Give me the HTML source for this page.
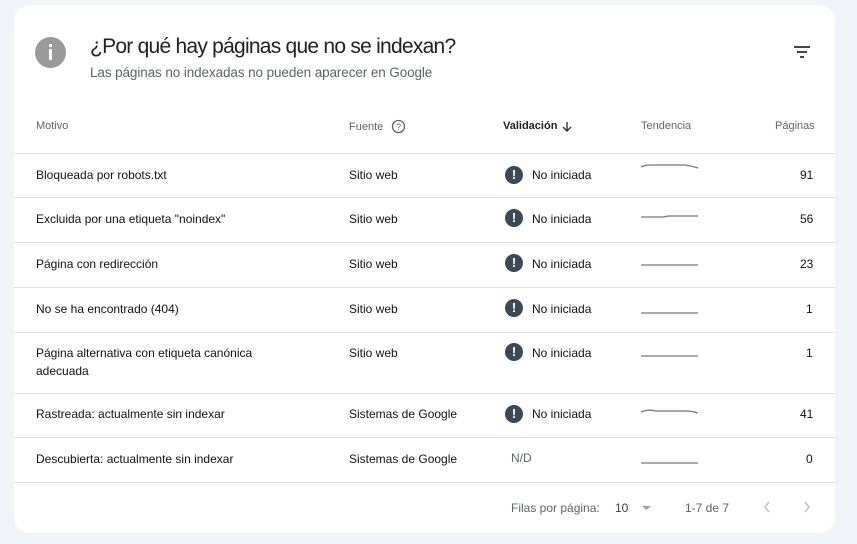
<!DOCTYPE html>
<html><head><meta charset="utf-8"><style>
*{margin:0;padding:0;box-sizing:border-box}
body{width:857px;height:544px;background:#f0f3f8;font-family:"Liberation Sans",Arial,sans-serif;position:relative;overflow:hidden;color:#202124}
.card{position:absolute;left:14px;top:5px;width:821px;height:528px;background:#fff;border-radius:16px}
.a{position:absolute;white-space:nowrap}
.line{position:absolute;left:14px;width:821px;height:1px;background:#e0e0e0}
.t{font-size:12px;color:#111}
.h{font-size:11px;color:#5f6368}
.ex{position:absolute;width:18px;height:18px;border-radius:50%;background:#3c4a57;color:#fff;font-weight:bold;font-size:13px;text-align:center;line-height:18px}
</style></head><body>
<div class="card"></div>
<div class="a" style="left:35px;top:37px;width:31px;height:31px;border-radius:50%;background:#9a9a9a"></div>
<div class="a" style="left:49px;top:44px;width:3px;height:3px;background:#fff;border-radius:1px"></div>
<div class="a" style="left:49px;top:49px;width:3px;height:11px;background:#fff;border-radius:1px"></div>
<div class="a" style="left:90px;top:35px;font-size:21px;color:#202124;letter-spacing:-0.75px">¿Por qué hay páginas que no se indexan?</div>
<div class="a" style="left:90px;top:65px;font-size:13.5px;color:#5f6368;letter-spacing:-0.1px">Las páginas no indexadas no pueden aparecer en Google</div>
<svg class="a" style="left:793px;top:45px" width="18" height="14"><path d="M1 2h16M4 7h10M7 12h4" stroke="#444" stroke-width="2"/></svg>

<div class="a h" style="left:36px;top:120px">Motivo</div>
<div class="a h" style="left:349px;top:121px">Fuente</div>
<svg class="a" style="left:391px;top:119px" width="15" height="15"><circle cx="7.5" cy="7.5" r="6" fill="none" stroke="#5f6368" stroke-width="1.3"/><text x="7.5" y="11" font-size="9" text-anchor="middle" fill="#5f6368" font-family="Liberation Sans">?</text></svg>
<div class="a" style="left:503px;top:120px;font-size:11px;color:#202124;font-weight:bold">Validación</div>
<svg class="a" style="left:561px;top:121px" width="12" height="12"><path d="M6 1v9M2 6l4 4 4-4" stroke="#333" stroke-width="1.4" fill="none"/></svg>
<div class="a h" style="left:641px;top:120px">Tendencia</div>
<div class="a h" style="left:775px;top:120px">Páginas</div>

<div class="line" style="top:153px"></div>
<div class="line" style="top:197px"></div>
<div class="line" style="top:242px"></div>
<div class="line" style="top:287px"></div>
<div class="line" style="top:332px"></div>
<div class="line" style="top:393px"></div>
<div class="line" style="top:437px"></div>
<div class="line" style="top:482px"></div>

<div class="a t" style="left:36px;top:168px">Bloqueada por robots.txt</div>
<div class="a t" style="left:349px;top:168px">Sitio web</div>
<div class="ex" style="left:505px;top:166px">!</div><div class="a t" style="left:532px;top:168px">No iniciada</div>
<svg class="a" style="left:640px;top:162px" width="60" height="12"><path d="M1 5Q5 3 10 3L45 3Q52 4 58 6" stroke="#777" stroke-width="1.3" fill="none"/></svg>
<div class="a t" style="left:800px;top:168px">91</div>

<div class="a t" style="left:36px;top:212px">Excluida por una etiqueta "noindex"</div>
<div class="a t" style="left:349px;top:212px">Sitio web</div>
<div class="ex" style="left:505px;top:209px">!</div><div class="a t" style="left:532px;top:212px">No iniciada</div>
<svg class="a" style="left:640px;top:210px" width="60" height="12"><path d="M1 7L24 7Q26 6 30 6L58 6" stroke="#777" stroke-width="1.3" fill="none"/></svg>
<div class="a t" style="left:800px;top:212px">56</div>

<div class="a t" style="left:36px;top:257px">Página con redirección</div>
<div class="a t" style="left:349px;top:257px">Sitio web</div>
<div class="ex" style="left:505px;top:254px">!</div><div class="a t" style="left:532px;top:257px">No iniciada</div>
<svg class="a" style="left:640px;top:259px" width="60" height="12"><path d="M1 6L58 6" stroke="#777" stroke-width="1.3"/></svg>
<div class="a t" style="left:800px;top:257px">23</div>

<div class="a t" style="left:36px;top:302px">No se ha encontrado (404)</div>
<div class="a t" style="left:349px;top:302px">Sitio web</div>
<div class="ex" style="left:505px;top:299px">!</div><div class="a t" style="left:532px;top:302px">No iniciada</div>
<svg class="a" style="left:640px;top:307px" width="60" height="12"><path d="M1 6L58 6" stroke="#777" stroke-width="1.3"/></svg>
<div class="a t" style="left:806px;top:302px">1</div>

<div class="a t" style="left:36px;top:346px">Página alternativa con etiqueta canónica</div>
<div class="a t" style="left:36px;top:364px">adecuada</div>
<div class="a t" style="left:349px;top:346px">Sitio web</div>
<div class="ex" style="left:505px;top:343px">!</div><div class="a t" style="left:532px;top:346px">No iniciada</div>
<svg class="a" style="left:640px;top:350px" width="60" height="12"><path d="M1 6L58 6" stroke="#777" stroke-width="1.3"/></svg>
<div class="a t" style="left:806px;top:346px">1</div>

<div class="a t" style="left:36px;top:407px">Rastreada: actualmente sin indexar</div>
<div class="a t" style="left:349px;top:407px">Sistemas de Google</div>
<div class="ex" style="left:505px;top:405px">!</div><div class="a t" style="left:532px;top:407px">No iniciada</div>
<svg class="a" style="left:640px;top:407px" width="60" height="12"><path d="M1 5Q8 2 16 4L45 4Q52 4 58 6" stroke="#777" stroke-width="1.3" fill="none"/></svg>
<div class="a t" style="left:800px;top:407px">41</div>

<div class="a t" style="left:36px;top:452px">Descubierta: actualmente sin indexar</div>
<div class="a t" style="left:349px;top:452px">Sistemas de Google</div>
<div class="a" style="left:511px;top:451px;font-size:12px;color:#5f6368">N/D</div>
<svg class="a" style="left:640px;top:457px" width="60" height="12"><path d="M1 6L58 6" stroke="#777" stroke-width="1.3"/></svg>
<div class="a t" style="left:806px;top:452px">0</div>

<div class="a" style="left:511px;top:501px;font-size:12px;color:#5f6368">Filas por página:</div>
<div class="a" style="left:615px;top:501px;font-size:12px;color:#3c4043">10</div>
<svg class="a" style="left:641px;top:505px" width="12" height="8"><path d="M1 1h9l-4.5 4z" fill="#9aa0a6"/></svg>
<div class="a" style="left:685px;top:501px;font-size:12px;color:#5f6368">1-7 de 7</div>
<svg class="a" style="left:762px;top:500px" width="10" height="14"><path d="M7 2L3 7l4 5" stroke="#bdc1c6" stroke-width="1.5" fill="none"/></svg>
<svg class="a" style="left:802px;top:500px" width="10" height="14"><path d="M3 2l4 5-4 5" stroke="#bdc1c6" stroke-width="1.5" fill="none"/></svg>
</body></html>
